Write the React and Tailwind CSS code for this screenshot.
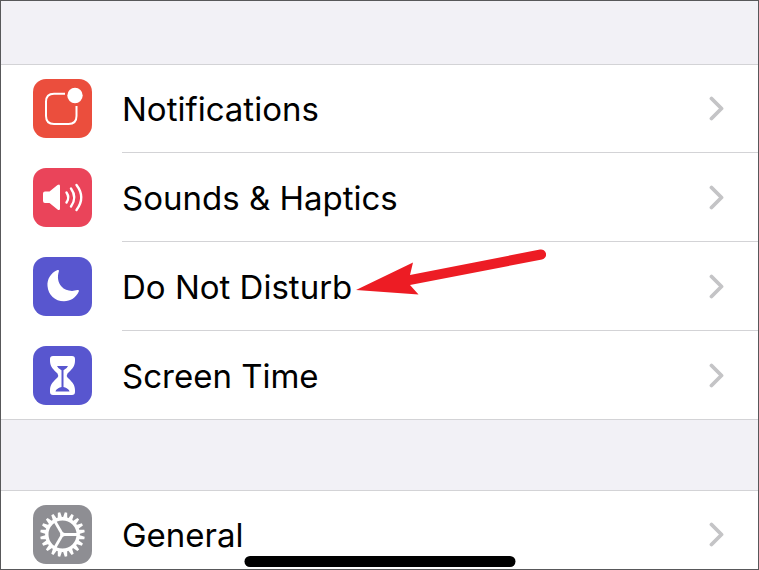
import React from 'react';

const TEETH = Array.from({ length: 20 }, (_, i) => i * 18 + 9);

function NotificationsIcon() {
  return (
    <svg viewBox="0 0 59 59" className="w-full h-full" fill="none" aria-hidden="true">
      <path
        d="M32 14.8H21Q13 14.8 13 22.8V37Q13 45 21 45H35.5Q43.5 45 43.5 37V27"
        stroke="white"
        strokeWidth="2"
      />
      <circle cx="42" cy="16.5" r="7.7" fill="white" />
    </svg>
  );
}

function SoundsIcon() {
  return (
    <svg viewBox="0 0 59 59" className="w-full h-full" fill="none" aria-hidden="true">
      <path
        d="M12 23.5H16.5L24.5 17Q27 15.5 27 18V40.5Q27 43 24.5 41.5L16.5 35H12Q10 35 10 33V25.5Q10 23.5 12 23.5Z"
        fill="white"
      />
      <g stroke="white" strokeWidth="2.4" strokeLinecap="round">
        <path d="M33.500 24.5Q37 29.5 33.5 34.5" />
        <path d="M38 20.5Q44.5 29.5 38 38.5" />
        <path d="M43.5 17Q53 29.5 43.5 42" />
      </g>
    </svg>
  );
}

function MoonIcon() {
  return (
    <svg viewBox="0 0 59 59" className="w-full h-full" aria-hidden="true">
      <path
        d="M24.5 13C17.5 16 14 22.5 14.5 29C15.2 38 22 44.3 31 44.3C37.5 44.3 43 40.5 45.8 34.5C46.2 33.5 45.5 32.8 44.5 33.1C38 35 32 33.5 28.500 29.5C25 25.5 24 20 25.9 14.3C26.2 13.2 25.5 12.6 24.5 13Z"
        fill="white"
      />
    </svg>
  );
}

function HourglassIcon() {
  return (
    <svg viewBox="0 0 59 59" className="w-full h-full" aria-hidden="true">
      <path
        d="M20 10H39Q42 10 42 13V15C42 21 38 24 34.5 27.5Q33.2 29.5 34.5 31.5C38 35 42 38 42 44V46Q42 49 39 49H20Q17 49 17 46V44C17 38 21 35 24.5 31.5Q25.8 29.5 24.5 27.5C21 24 17 21 17 15V13Q17 10 20 10Z"
        fill="white"
      />
      <path
        d="M24 20H35Q34.500 22 30.500 24.3V41Q36 42.500 36.500 45.5H22.5Q23 42.5 28.5 41V24.3Q24.5 22 24 20Z"
        fill="#5856cf"
      />
    </svg>
  );
}

function GearIcon() {
  return (
    <svg viewBox="0 0 59 59" className="w-full h-full" fill="none" aria-hidden="true">
      <g transform="translate(29.5 29.5)">
        <circle r="15.7" stroke="white" strokeWidth="3.4" />
        {TEETH.map((angle) => (
          <path key={angle} d="M16.5 -2.2L22.3 -1.2V1.2L16.5 2.2Z" fill="white" transform={`rotate(${angle})`} />
        ))}
        {[0, 120, 240].map((angle) => (
          <path key={angle} d="M0 0H15" stroke="white" strokeWidth="2.8" transform={`rotate(${angle})`} />
        ))}
        <circle r="2.3" fill="white" />
      </g>
    </svg>
  );
}

function Chevron() {
  return (
    <svg viewBox="0 0 15 25" className="w-[15px] h-[25px] shrink-0" fill="none" aria-hidden="true">
      <path d="M2.5 2.5L12.5 12.5L2.5 22.5" stroke="#c4c4c6" strokeWidth="3.8" strokeLinecap="round" strokeLinejoin="round" />
    </svg>
  );
}

function Arrow() {
  return (
    <svg viewBox="0 0 190 48" className="absolute left-[234px] top-1.5 w-[190px] h-12" aria-hidden="true">
      <path d="M0 42L57 14.500L54 27L184 1.5A5 5 0 0 1 186 11.500L54 37L62.500 46.500Z" fill="#ed1c24" />
    </svg>
  );
}

const ALERTS = [
  { label: 'Notifications', color: 'bg-[#eb4e3d]', Icon: NotificationsIcon },
  { label: 'Sounds & Haptics', color: 'bg-[#ea445a]', Icon: SoundsIcon },
  { label: 'Do Not Disturb', color: 'bg-[#5856cf]', Icon: MoonIcon, marked: true },
  { label: 'Screen Time', color: 'bg-[#5856cf]', Icon: HourglassIcon },
];

const SYSTEM = [{ label: 'General', color: 'bg-[#8e8e93]', Icon: GearIcon }];

function SettingsRow({ label, color, Icon, marked }) {
  return (
    <li className="group">
      <a href="#" className="flex items-stretch gap-[30px] pl-8 text-black">
        <span className={`w-[59px] h-[59px] my-[15px] rounded-[13px] shrink-0 overflow-hidden ${color}`}>
          <Icon />
        </span>
        <span className="relative flex flex-1 items-center justify-between pr-[34px] pt-px border-b border-[#d3d3d6] group-last:border-transparent">
          <span className="text-[33px] leading-10">{label}</span>
          <Chevron />
          {marked && <Arrow />}
        </span>
      </a>
    </li>
  );
}

function SettingsGroup({ items }) {
  return (
    <ul className="bg-white shadow-[inset_0_1px_0_#d3d3d6,inset_0_-1px_0_#d3d3d6]">
      {items.map((item) => (
        <SettingsRow key={item.label} {...item} />
      ))}
    </ul>
  );
}

function App() {
  return (
    <main className="relative h-screen overflow-hidden border border-[#58585a] bg-[#f2f1f6] pt-[63px] font-['Inter','Liberation_Sans',sans-serif]">
      <div className="flex flex-col gap-[70px]">
        <SettingsGroup items={ALERTS} />
        <SettingsGroup items={SYSTEM} />
      </div>
      <div className="absolute bottom-0.5 left-1/2 w-[271px] h-[11px] -translate-x-1/2 rounded-full bg-black" />
    </main>
  );
}

export default App;
